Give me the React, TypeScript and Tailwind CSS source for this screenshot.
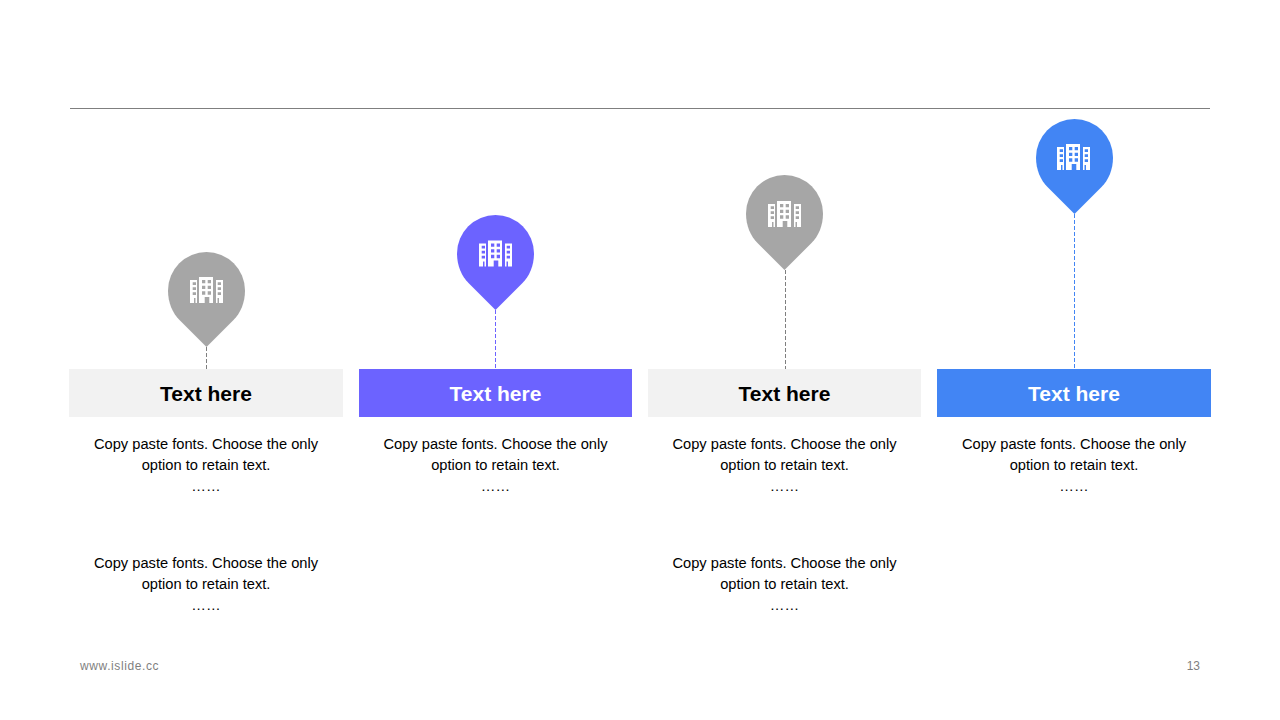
const columns = [
  { lineLength: 22, lineColor: "#7f7f7f", lineClass: "", pinFill: "#a6a6a6", iconX: 22, iconY: 25, chartClass: "pl-px", barClass: "bg-[#f2f2f2] text-black", twoBlocks: true },
  { lineLength: 59, lineColor: "#6c63ff", lineClass: "", pinFill: "#6c63ff", iconX: 22, iconY: 25.5, chartClass: "", barClass: "bg-[#6c63ff] text-white", twoBlocks: false },
  { lineLength: 99, lineColor: "#7f7f7f", lineClass: "translate-x-px", pinFill: "#a6a6a6", iconX: 22, iconY: 26, chartClass: "", barClass: "bg-[#f2f2f2] text-black", twoBlocks: true },
  { lineLength: 155, lineColor: "#4285f4", lineClass: "", pinFill: "#4285f4", iconX: 21, iconY: 25, chartClass: "pl-px", barClass: "bg-[#4285f4] text-white", twoBlocks: false },
];

function Pin({ fill, iconX, iconY }: { fill: string; iconX: number; iconY: number }) {
  return (
    <svg width="77" height="95" viewBox="0 0 77 95" className="block">
      <path
        d="M38.5 95 L11.5 68 C4.5 61 0 50.5 0 38.5 A38.5 38.5 0 0 1 77 38.5 C77 50.5 72.5 61 65.5 68 Z"
        fill={fill}
      />
      <path
        transform={`translate(${iconX} ${iconY})`}
        fill="#fff"
        fillRule="evenodd"
        d="M0 3H7V26H5.5V21H4V26H0Z
           M2.7 5.3V8H6V5.3Z M2.7 10.3V13H6V10.3Z M2.7 15.3V18H6V15.3Z
           M9 0H23V26H19.3V20H14.7V26H9Z
           M12 3V6.3H15.3V3Z M17.7 3V6.3H21V3Z
           M12 8.7V12H15.3V8.7Z M17.7 8.7V12H21V8.7Z
           M12 14.3V17.7H15.3V14.3Z M17.7 14.3V17.7H21V14.3Z
           M26 3H33V26H29V21H27.5V26H26Z
           M27.7 5.3V8H31V5.3Z M27.7 10.3V13H31V10.3Z M27.7 15.3V18H31V15.3Z"
      />
    </svg>
  );
}

function DashedLine({ length, color, className }: { length: number; color: string; className: string }) {
  return (
    <svg width="1" height={length} className={`block ${className}`}>
      <line x1="0.5" y1="0" x2="0.5" y2={length} stroke={color} strokeWidth="1" strokeDasharray="4 2" />
    </svg>
  );
}

function Blurb() {
  return (
    <p className="text-center text-[14.67px] leading-[21px] text-black">
      Copy paste fonts. Choose the only
      <br />
      option to retain text.
      <br />
      ……
    </p>
  );
}

export default function App() {
  return (
    <div className="relative h-[720px] w-[1280px] overflow-hidden bg-white font-['Liberation_Sans',Arial,sans-serif]">
      <div className="pt-[108px] pl-[70px]">
        <div className="h-px w-[1140px] bg-[#7f7f7f]" />
      </div>

      <div className="ml-[69px] grid h-[260px] w-[1142px] grid-cols-[274px_273px_273px_274px] items-end gap-x-[16px]">
        {columns.map((col, i) => (
          <div key={i} className={`flex flex-col items-center ${col.chartClass}`}>
            <Pin fill={col.pinFill} iconX={col.iconX} iconY={col.iconY} />
            <DashedLine length={col.lineLength} color={col.lineColor} className={col.lineClass} />
          </div>
        ))}
      </div>

      <div className="ml-[69px] grid w-[1142px] grid-cols-[274px_273px_273px_274px] gap-x-[16px]">
        {columns.map((col, i) => (
          <div key={i} className="flex flex-col">
            <div className={`flex h-[48px] items-center justify-center pt-[1px] text-[21px] font-bold ${col.barClass}`}>
              Text here
            </div>
            <div className="flex flex-col gap-y-[56px] pt-[17px]">
              <Blurb />
              {col.twoBlocks && <Blurb />}
            </div>
          </div>
        ))}
      </div>

      <div className="absolute right-[80px] bottom-[47px] left-[80px] flex justify-between text-[12px] leading-[14px] text-[#7f7f7f]">
        <span className="tracking-[0.6px]">www.islide.cc</span>
        <span>13</span>
      </div>
    </div>
  );
}
